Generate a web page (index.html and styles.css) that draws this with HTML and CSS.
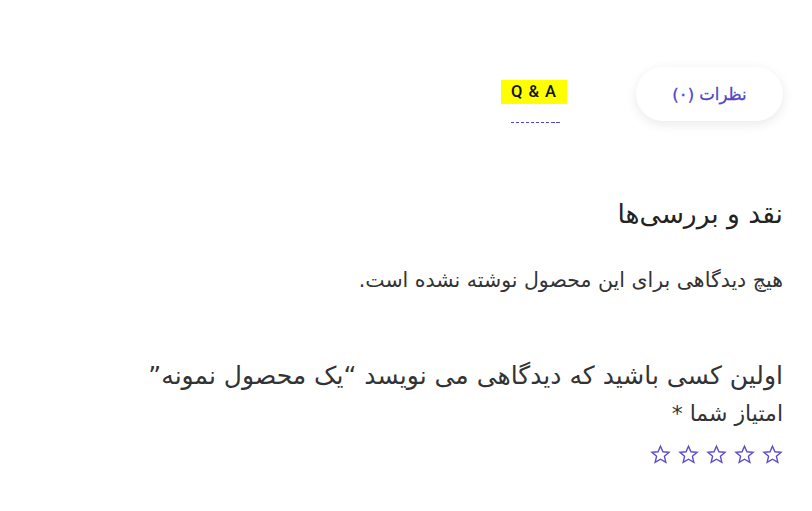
FILE: index.html
```html
<!DOCTYPE html>
<html lang="fa" dir="rtl">
<head>
<meta charset="utf-8">
<link rel="stylesheet" href="styles.css">
</head>
<body>
<div class="page">
  <ul class="tabs">
    <li class="tab tab-active">نظرات (۰)</li>
    <li class="tab tab-qa"><span class="qa-label">Q &amp; A</span><span class="qa-dash"></span></li>
  </ul>
  <section class="reviews">
    <h2 class="reviews-title">نقد و بررسی‌ها</h2>
    <p class="no-reviews">هیچ دیدگاهی برای این محصول نوشته نشده است.</p>
    <h3 class="reply-title">اولین کسی باشید که دیدگاهی می نویسد “یک محصول نمونه”</h3>
    <div class="rating-label">امتیاز شما <span class="req">*</span></div>
    <div class="stars">
      <svg class="star" viewBox="0 0 24 24"><polygon points="12,2.5 14.8,8.9 21.8,9.5 16.5,14.1 18.1,21 12,17.4 5.9,21 7.5,14.1 2.2,9.5 9.2,8.9"/></svg>
      <svg class="star" viewBox="0 0 24 24"><polygon points="12,2.5 14.8,8.9 21.8,9.5 16.5,14.1 18.1,21 12,17.4 5.9,21 7.5,14.1 2.2,9.5 9.2,8.9"/></svg>
      <svg class="star" viewBox="0 0 24 24"><polygon points="12,2.5 14.8,8.9 21.8,9.5 16.5,14.1 18.1,21 12,17.4 5.9,21 7.5,14.1 2.2,9.5 9.2,8.9"/></svg>
      <svg class="star" viewBox="0 0 24 24"><polygon points="12,2.5 14.8,8.9 21.8,9.5 16.5,14.1 18.1,21 12,17.4 5.9,21 7.5,14.1 2.2,9.5 9.2,8.9"/></svg>
      <svg class="star" viewBox="0 0 24 24"><polygon points="12,2.5 14.8,8.9 21.8,9.5 16.5,14.1 18.1,21 12,17.4 5.9,21 7.5,14.1 2.2,9.5 9.2,8.9"/></svg>
    </div>
  </section>
</div>
</body>
</html>
```

FILE: styles.css
```css
html, body {
  margin: 0;
  padding: 0;
  background: #ffffff;
}
body {
  font-family: "DejaVu Sans", sans-serif;
  color: #333333;
}
.page {
  padding: 67px 29px 0 29px;
}
.tabs {
  list-style: none;
  margin: 0;
  padding: 0;
  display: flex;
  align-items: flex-start;
  gap: 69px;
}
.tab-active {
  height: 54px;
  width: 147px;
  border-radius: 27px;
  background: #fff;
  box-shadow: 0 3px 12px rgba(0, 0, 0, 0.09);
  color: #5046c8;
  font-size: 16.5px;
  font-weight: 500;
  display: flex;
  align-items: center;
  justify-content: center;
  -webkit-text-stroke: 0.3px #5046c8;
}
.tab-qa {
  margin-top: 13px;
  display: flex;
  flex-direction: column;
  align-items: center;
}
.qa-label {
  font-family: Roboto, "Liberation Sans", sans-serif;
  font-weight: 500;
  font-size: 16.5px;
  color: #111;
  background: #ffff00;
  padding: 0 10px;
  line-height: 24px;
  display: block;
  direction: ltr;
  letter-spacing: 1px;
}
.qa-dash {
  display: block;
  width: 49px;
  height: 1px;
  margin-top: 18px;
  margin-left: 4px;
  background: repeating-linear-gradient(to right, #4f46d0 0 3.5px, transparent 3.5px 5px);
}
.reviews {
  margin-top: 71px;
}
.reviews-title {
  margin: 0;
  font-size: 26.5px;
  font-weight: 500;
  color: #222;
  line-height: 40px;
}
.no-reviews {
  margin: 32px 0 0 0;
  font-size: 20.5px;
  line-height: 28px;
  color: #333;
}
.reply-title {
  margin: 64px 0 0 0;
  font-size: 25px;
  font-weight: normal;
  color: #333;
  line-height: 36px;
}
.rating-label {
  font-size: 22px;
  line-height: 30px;
  margin-top: 5px;
  color: #333;
}
.stars {
  margin-top: 15px;
  display: flex;
  gap: 7px;
}
.star {
  width: 21px;
  height: 21px;
  fill: none;
  stroke: #5b4bd1;
  stroke-width: 1.6;
  stroke-linejoin: miter;
}
```
